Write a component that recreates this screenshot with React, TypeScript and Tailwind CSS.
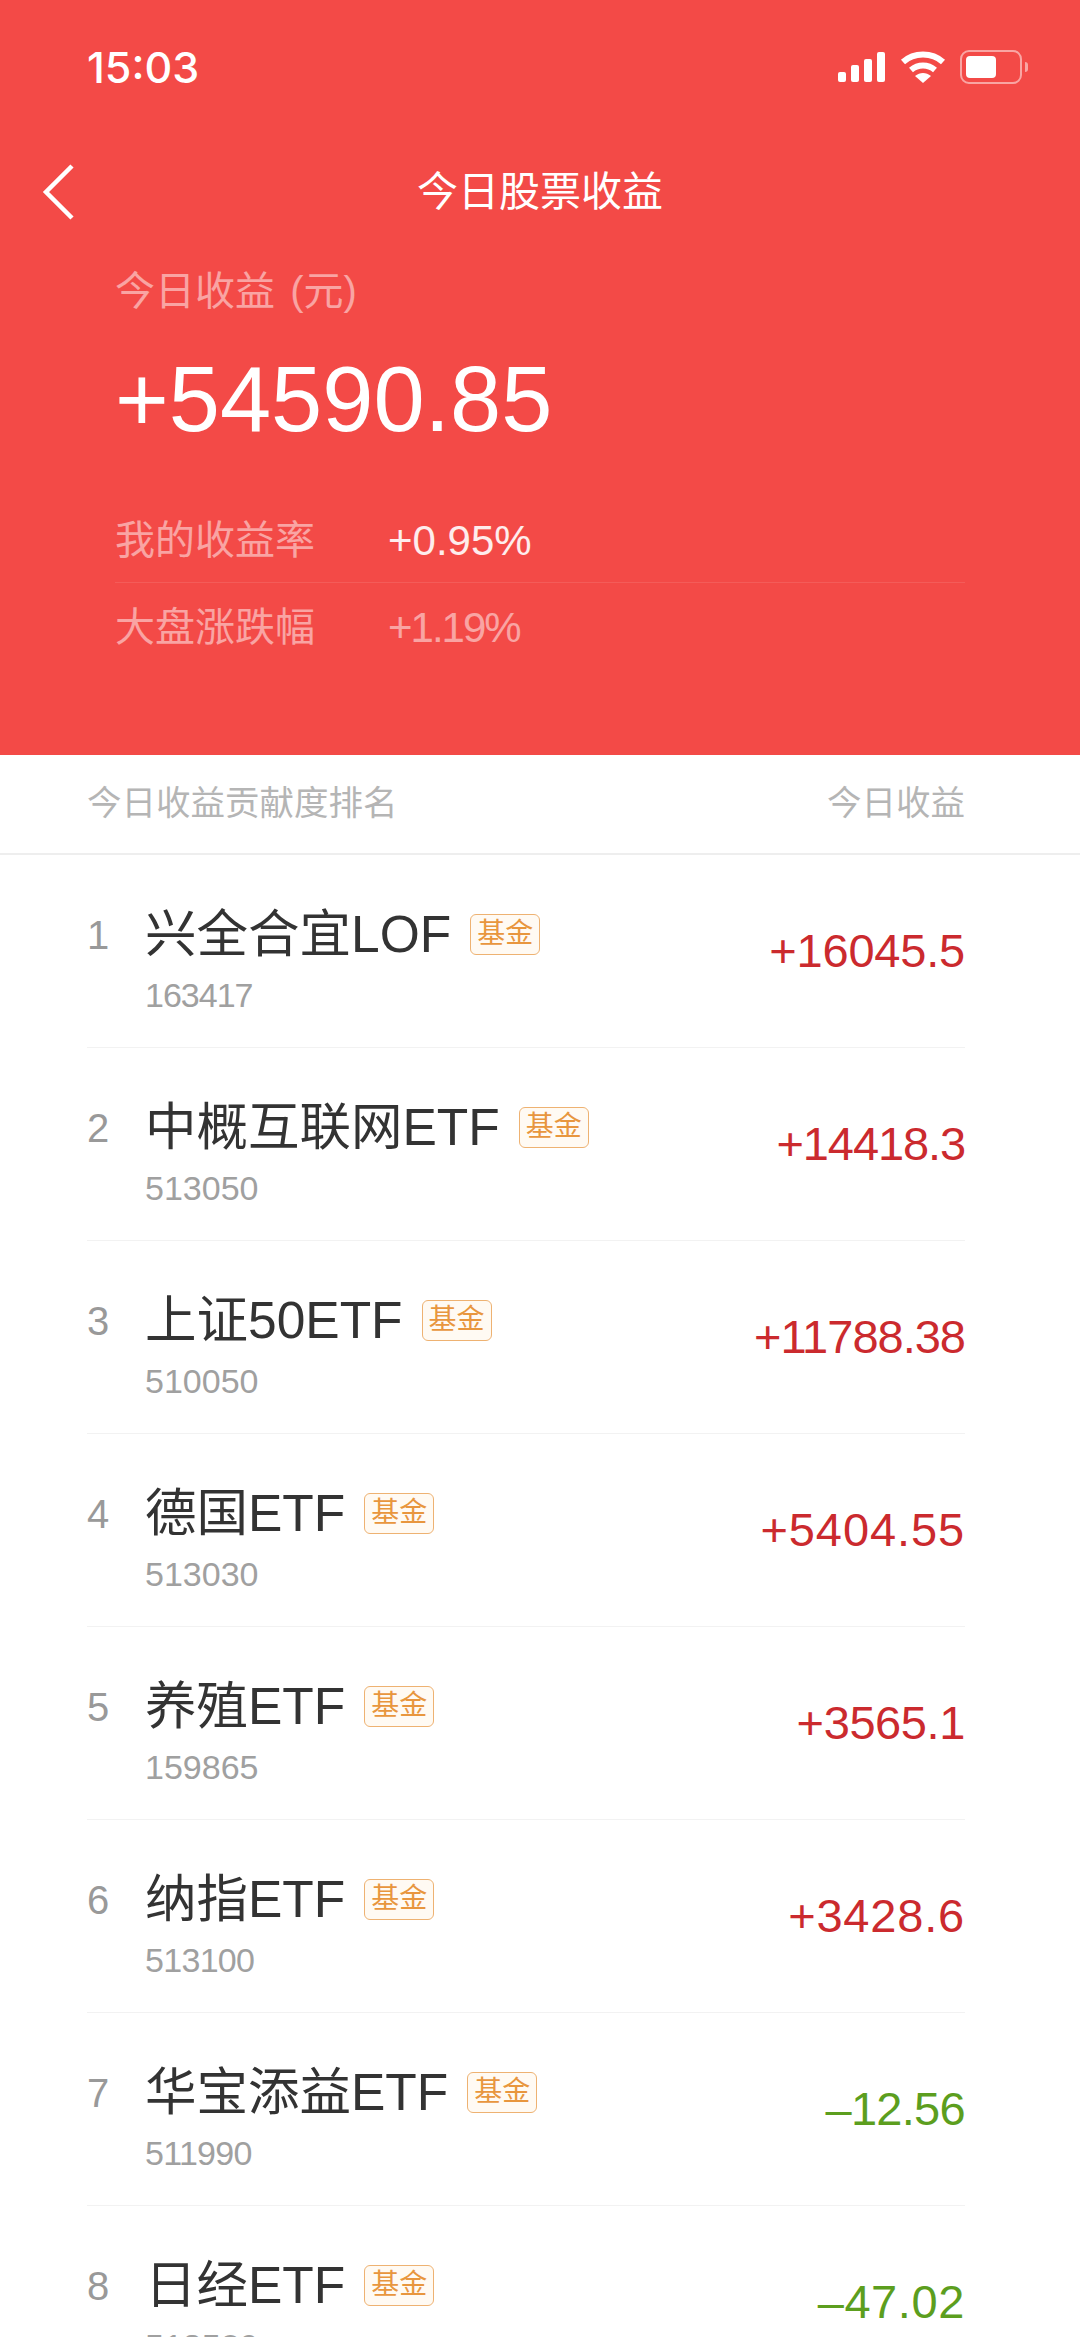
const rows = [
  { rank: 1, name: "兴全合宜LOF", code: "163417", codeCls: "tracking-[-1px]", amount: "+16045.5", amountCls: "tracking-[-0.2px]", up: true },
  { rank: 2, name: "中概互联网ETF", code: "513050", codeCls: "", amount: "+14418.3", amountCls: "tracking-[-1.1px]", up: true },
  { rank: 3, name: "上证50ETF", code: "510050", codeCls: "", amount: "+11788.38", amountCls: "tracking-[-1px]", up: true },
  { rank: 4, name: "德国ETF", code: "513030", codeCls: "", amount: "+5404.55", amountCls: "tracking-[0.9px]", up: true },
  { rank: 5, name: "养殖ETF", code: "159865", codeCls: "", amount: "+3565.1", amountCls: "tracking-[-0.4px]", up: true },
  { rank: 6, name: "纳指ETF", code: "513100", codeCls: "tracking-[-0.7px]", amount: "+3428.6", amountCls: "tracking-[0.8px]", up: true },
  { rank: 7, name: "华宝添益ETF", code: "511990", codeCls: "tracking-[-0.7px]", amount: "–12.56", amountCls: "tracking-[-0.7px]", up: false },
  { rank: 8, name: "日经ETF", code: "513520", codeCls: "", amount: "–47.02", amountCls: "tracking-[0.6px]", up: false },
];

function StatusBar() {
  return (
    <div className="flex items-center justify-between h-[134px] pl-[87px] pr-[52px]">
      <span className="font-['Inter'] text-[43px] font-medium text-white">15:03</span>
      <div className="flex items-center gap-[14px]">
        <svg width="48" height="30" viewBox="0 0 48 30" fill="#fff">
          <rect x="0" y="20" width="8" height="10" rx="2" />
          <rect x="13" y="13" width="8" height="17" rx="2" />
          <rect x="26" y="7" width="8" height="23" rx="2" />
          <rect x="39" y="0" width="8" height="30" rx="2" />
        </svg>
        <svg width="46" height="34" viewBox="0 0 46 34" fill="none" stroke="#fff" strokeWidth="6">
          <path d="M3 12C14 2 32 2 43 12" />
          <path d="M11 20C18 14 28 14 35 20" />
          <path d="M23 33L15 26C20 22 26 22 31 26Z" fill="#fff" stroke="none" />
        </svg>
        <div className="flex items-center">
          <div className="w-[62px] h-[34px] rounded-[9px] border-2 border-white/50 p-[4px]">
            <div className="w-[30px] h-full rounded-[4px] bg-white" />
          </div>
          <div className="w-[3px] h-[10px] ml-[3px] rounded-r-full bg-white/50" />
        </div>
      </div>
    </div>
  );
}

function Row({ rank, name, code, codeCls, amount, amountCls, up }: (typeof rows)[number]) {
  return (
    <div className="flex items-center justify-between h-[193px] ml-[87px] mr-[115px] border-b border-[#f2f2f2]">
      <div className="flex items-start mt-[15px]">
        <span className="w-[58px] text-[40px] leading-[50px] mt-[8px] text-[#999]">{rank}</span>
        <div className="flex flex-col">
          <div className="flex items-center gap-[19px]">
            <span className="text-[51.5px] leading-[64px] text-[#333]">{name}</span>
            <span className="flex items-center justify-center w-[70px] h-[41px] rounded-[6px] border-[1.5px] border-[#eeb272] bg-[#fffaf3] text-[28px] leading-none text-[#e8963e]">
              基金
            </span>
          </div>
          <span className={`text-[34px] leading-[40px] mt-[9px] text-[#a0a0a0] ${codeCls}`}>{code}</span>
        </div>
      </div>
      <span className={`text-[47px] ${up ? "text-[#cb2a2e]" : "text-[#5c9e1e]"} ${amountCls}`}>{amount}</span>
    </div>
  );
}

export default function App() {
  return (
    <div className="h-[2337px] overflow-hidden bg-white font-['Liberation_Sans','Noto_Sans_CJK_SC',sans-serif]">
      <div className="h-[755px] bg-[#f34a47] text-white">
        <StatusBar />
        <div className="grid grid-cols-[1fr_auto_1fr] items-center h-[116px] pl-[42px]">
          <svg width="32" height="56" viewBox="0 0 32 56" fill="none" stroke="#fff" strokeWidth="4.5">
            <path d="M30 2L4 28L30 54" />
          </svg>
          <span className="text-[41px] leading-none pr-[42px]">今日股票收益</span>
        </div>
        <div className="mx-[115px]">
          <p className="mt-[16px] text-[40px] leading-[50px] text-white/50">
            今日收益 <span className="ml-[4px]">(元)</span>
          </p>
          <p className="mt-[33px] text-[92px] leading-[100px]">+54590.85</p>
          <div className="mt-[49px] flex items-center h-[85px] border-b border-white/10">
            <span className="w-[273px] text-[40px] text-white/50">我的收益率</span>
            <span className="text-[42px] text-white/90">+0.95%</span>
          </div>
          <div className="flex items-center h-[88px]">
            <span className="w-[273px] text-[40px] text-white/50">大盘涨跌幅</span>
            <span className="text-[42px] tracking-[-2px] text-white/50">+1.19%</span>
          </div>
        </div>
      </div>
      <div className="flex items-center justify-between h-[100px] pl-[87px] pr-[115px] border-b-2 border-[#eeeeee] text-[34.5px] text-[#b5b5b5]">
        <span>今日收益贡献度排名</span>
        <span>今日收益</span>
      </div>
      {rows.map((r) => (
        <Row key={r.rank} {...r} />
      ))}
    </div>
  );
}
